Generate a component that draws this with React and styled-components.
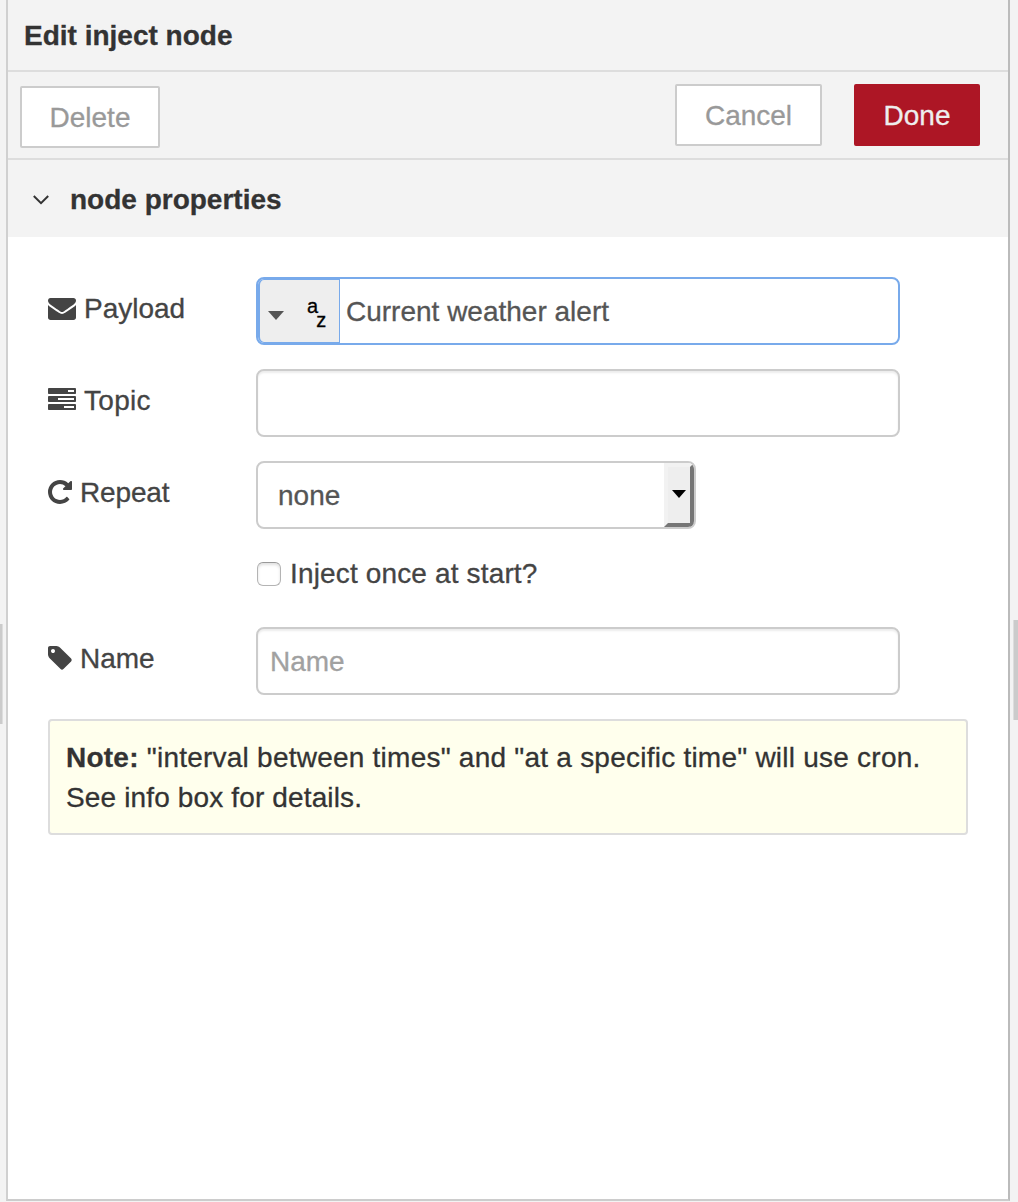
import React from "react";
import styled, { createGlobalStyle } from "styled-components";

const GlobalStyle = createGlobalStyle`
  * { box-sizing: border-box; }
  body {
    margin: 0;
    background: #f3f3f3;
    color: #333;
    font: 28px/40px "Liberation Sans", Arial, sans-serif;
    -webkit-text-stroke: 0.3px;
  }
`;

const Workspace = styled.div`
  display: flex;
  height: 1202px;
  overflow: hidden;
`;

const Gutter = styled.div`
  flex: none;
  display: flex;
  flex-direction: column;
  width: ${(p) => p.$width}px;
  align-items: ${(p) => p.$align};
  padding-top: ${(p) => p.$top}px;
  background: #f3f3f3;
`;

const Handle = styled.div`
  width: ${(p) => p.$width}px;
  height: 100px;
  background: #cbcbcb;
  border-${(p) => p.$edge}: 1px solid #ddd;
`;

const Tray = styled.section`
  flex: 1;
  display: flex;
  flex-direction: column;
  min-width: 0;
  height: 1201px;
  background: #fff;
  border: solid;
  border-width: 0 2px 2px;
  border-color: #ccc #bbb #ccc #d0d0d0;
`;

const Title = styled.header`
  height: 72px;
  padding: 16px 16px 0;
  background: #f3f3f3;
  border-bottom: 2px solid #ddd;
  font-weight: bold;
`;

const Toolbar = styled.div`
  display: flex;
  gap: 32px;
  height: 88px;
  padding: 12px 28px 0 12px;
  background: #f3f3f3;
  border-bottom: 2px solid #ddd;
`;

const Button = styled.button`
  width: ${(p) => p.$width}px;
  height: 62px;
  padding: 1px 0 0;
  border: 2px solid ${(p) => (p.$primary ? "#ad1625" : "#ccc")};
  border-radius: 2px;
  background: ${(p) => (p.$primary ? "#ad1625" : "#fff")};
  color: ${(p) => (p.$primary ? "#eee" : "#999")};
  font: inherit;
  line-height: 57px;
  margin: ${(p) => (p.$start ? "2px auto 0 0" : "0")};
`;

const SectionHeader = styled.div`
  display: flex;
  align-items: center;
  gap: 21px;
  height: 77px;
  padding: 2px 25px 0;
  background: #f3f3f3;
  font-weight: bold;
`;

const Text = styled.span`
  letter-spacing: ${(p) => p.$tracking || 0}px;
  white-space: nowrap;
`;

const Form = styled.form`
  display: flex;
  flex-direction: column;
  gap: 24px;
  padding: 40px;
`;

const Row = styled.div`
  display: flex;
  height: 68px;
`;

const Label = styled.label`
  display: flex;
  align-items: center;
  gap: 8px;
  width: 208px;
  padding-bottom: 5px;
  color: #444;
  svg { margin-bottom: 2px; }
`;

const Input = styled.input`
  width: 644px;
  height: 68px;
  padding: 2px 12px 0;
  border: 2px solid #ccc;
  border-radius: 8px;
  outline: 0;
  background: #fff;
  box-shadow: inset 0 2px 2px rgba(0, 0, 0, 0.075);
  color: #555;
  font: inherit;
  &::placeholder { color: #a1a1a1; opacity: 1; }
`;

const TypedInput = styled.div`
  display: flex;
  width: 644px;
  height: 68px;
  border: 2px solid #78aaeb;
  border-radius: 8px;
  background: #fff;
`;

const TypeButton = styled.button`
  display: flex;
  width: 82px;
  padding: 0 0 0 8px;
  border: solid #78aaeb;
  border-width: 1px 1px 1px 2px;
  border-radius: 6px 0 0 6px;
  background: #eee;
  svg { display: block; }
`;

const TypeIcon = styled.span`
  display: flex;
  margin: 14px 0 0 23px;
  color: #000;
  font: 20px/24px "Liberation Sans", Arial, sans-serif;
  span + span { margin: 14px 0 0 -2px; }
`;

const ValueInput = styled.input`
  flex: 1;
  min-width: 0;
  padding: 2px 6px 0;
  border: 0;
  outline: 0;
  background: transparent;
  color: #555;
  font: inherit;
`;

const Select = styled.div`
  display: flex;
  justify-content: space-between;
  width: 440px;
  height: 68px;
  padding-left: 20px;
  border: 2px solid #ccc;
  border-radius: 8px;
  overflow: hidden;
  background: #fff;
  color: #555;
  line-height: 66px;
`;

const SelectButton = styled.span`
  display: flex;
  align-items: center;
  justify-content: center;
  width: 30px;
  height: 64px;
  padding-bottom: 2px;
  border: solid;
  border-width: 4px;
  border-color: #f2f2f2 #767676 #767676 #f2f2f2;
  background: #eee;
`;

const CheckRow = styled.label`
  display: flex;
  align-items: center;
  gap: 9px;
  height: 50px;
  padding: 0 0 8px 209px;
  color: #444;
`;

const Checkbox = styled.input`
  appearance: none;
  width: 24px;
  height: 24px;
  margin: 0;
  border: 1px solid #b4b4b4;
  border-top-color: #999;
  border-radius: 6px;
  background: #fff;
  box-shadow: inset 0 2px 3px rgba(0, 0, 0, 0.12);
`;

const Note = styled.div`
  width: 920px;
  height: 116px;
  padding: 17px 16px;
  border: 2px solid #ddd;
  border-radius: 4px;
  background: #ffffed;
`;

const GLYPHS = {
  envelope: [0, 1792, "M1792 710v794q0 66-47 113t-113 47h-1472q-66 0-113-47t-47-113v-794q44 49 101 87 362 246 497 345 57 42 92.5 65.5t94.5 48 110 24.5h2q51 0 110-24.5t94.5-48 92.5-65.5q170-123 498-345 57-39 100-87zm0-294q0 79-49 151t-122 123q-376 261-468 325-10 7-42.5 31t-54 38.5-52 32.5-57.5 27-50 9h-2q-23 0-50-9t-57.5-27-52-32.5-54-38.5-42.5-31q-91-64-262-182.5t-205-142.5q-62-42-117-115.5t-55-136.5q0-78 41.5-130t118.5-52h1472q65 0 112.5 47t47.5 113z"],
  tasks: [0, 1792, "M1024 1408h640v-128h-640v128zm-384-512h1024v-128h-1024v128zm640-512h384v-128h-384v128zm512 832v256q0 26-19 45t-45 19h-1664q-26 0-45-19t-19-45v-256q0-26 19-45t45-19h1664q26 0 45 19t19 45zm0-512v256q0 26-19 45t-45 19h-1664q-26 0-45-19t-19-45v-256q0-26 19-45t45-19h1664q26 0 45 19t19 45zm0-512v256q0 26-19 45t-45 19h-1664q-26 0-45-19t-19-45v-256q0-26 19-45t45-19h1664q26 0 45 19t19 45z"],
  repeat: [128, 1536, "M1664 256v448q0 26-19 45t-45 19h-448q-42 0-59-40-17-39 14-69l138-138q-148-137-349-137-104 0-198.5 40.5t-163.5 109.5-109.5 163.5-40.5 198.5 40.5 198.5 109.5 163.5 163.5 109.5 198.5 40.5q119 0 225-52t179-147q7-10 23-12 15 0 25 9l137 138q9 8 9.5 20.5t-7.5 22.5q-109 132-264 204.5t-327 72.5q-156 0-298-61t-245-164-164-245-61-298 61-298 164-245 245-164 298-61q147 0 284.5 55.5t244.5 156.5l130-129q29-31 70-14 39 17 39 59z"],
  tag: [128, 1536, "M576 448q0-53-37.5-90.5t-90.5-37.5-90.5 37.5-37.5 90.5 37.5 90.5 90.5 37.5 90.5-37.5 37.5-90.5zm1067 576q0 53-37 90l-491 492q-39 37-91 37-53 0-90-37l-715-716q-38-37-64.5-101t-26.5-117v-416q0-52 38-90t90-38h416q53 0 117 26.5t102 64.5l715 714q37 39 37 91z"],
};

function Glyph({ name }) {
  const [x, width, d] = GLYPHS[name];
  return (
    <svg width={width / 64} height="28" viewBox={`${x} 0 ${width} 1792`} fill="currentColor" aria-hidden="true">
      <path d={d} />
    </svg>
  );
}

export default function App() {
  return (
    <>
      <GlobalStyle />
      <Workspace>
        <Gutter $width={6} $top={624} $align="flex-start">
          <Handle $width={3} $edge="right" />
        </Gutter>
        <Tray>
          <Title><Text>Edit inject node</Text></Title>
          <Toolbar>
            <Button $width={140} $start>Delete</Button>
            <Button $width={147}>Cancel</Button>
            <Button $width={126} $primary>Done</Button>
          </Toolbar>
          <SectionHeader>
            <svg width="16" height="10" viewBox="0 0 16 10" fill="none" stroke="#333" strokeWidth="2">
              <path d="M.8 1 8 8.2 15.2 1" />
            </svg>
            <Text>node properties</Text>
          </SectionHeader>
          <Form>
            <Row>
              <Label><Glyph name="envelope" /><Text>Payload</Text></Label>
              <TypedInput>
                <TypeButton type="button">
                  <svg width="16" height="64" viewBox="0 0 16 64" fill="#555"><path d="M0 31h16l-8 9z" /></svg>
                  <TypeIcon><span>a</span><span>z</span></TypeIcon>
                </TypeButton>
                <ValueInput defaultValue="Current weather alert" />
              </TypedInput>
            </Row>
            <Row>
              <Label><Glyph name="tasks" /><Text $tracking={0.3}>Topic</Text></Label>
              <Input />
            </Row>
            <Row>
              <Label><Glyph name="repeat" /><Text $tracking={-0.15}>Repeat</Text></Label>
              <Select>
                <Text>none</Text>
                <SelectButton>
                  <svg width="14" height="8" viewBox="0 0 14 8"><path d="M0 0h14L7 8z" /></svg>
                </SelectButton>
              </Select>
            </Row>
            <CheckRow>
              <Checkbox type="checkbox" />
              <Text $tracking={0.15}>Inject once at start?</Text>
            </CheckRow>
            <Row>
              <Label><Glyph name="tag" /><Text>Name</Text></Label>
              <Input placeholder="Name" />
            </Row>
            <Note>
              <Text $tracking={0.235}><b>Note:</b> "interval between times" and "at a specific time" will use cron.</Text>
              <br />
              <Text $tracking={0.14}>See info box for details.</Text>
            </Note>
          </Form>
        </Tray>
        <Gutter $width={8} $top={620} $align="flex-end">
          <Handle $width={5} $edge="left" />
        </Gutter>
      </Workspace>
    </>
  );
}
